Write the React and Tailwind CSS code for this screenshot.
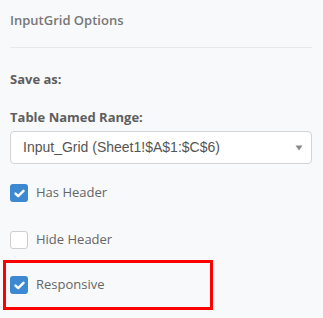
export default function App() {
  const Check = ({ checked }) =>
    checked ? (
      <span className="flex h-[18px] w-[18px] items-center justify-center rounded-[3px] bg-[#3c88d1]">
        <svg width="11" height="9" viewBox="0 0 11 9">
          <path d="M1.5 4.6 L4.2 7.2 L9.5 1.8" fill="none" stroke="#fff" strokeWidth="2.4" strokeLinecap="round" strokeLinejoin="round" />
        </svg>
      </span>
    ) : (
      <span className="h-[18px] w-[18px] rounded-[3px] border border-[#cfcfcf] bg-white" />
    );

  return (
    <div className="h-[318px] w-[323px] overflow-hidden bg-[#f8f9fb] font-['Open_Sans',sans-serif]">
      <div className="px-[10px] pt-[10px]">
        <div className="text-[13px] font-semibold leading-[20px] text-[#777777]">InputGrid Options</div>
        <div className="mt-[17px] h-px w-[302px] bg-[#e8e9ec]" />
        <div className="mt-[22px] text-[13px] font-bold leading-[18px] text-[#5e5e5e]">Save as:</div>
        <div className="mt-[20px] text-[13px] font-bold leading-[18px] text-[#5e5e5e]">Table Named Range:</div>
        <div className="mt-[5px] flex h-[33px] w-[302px] items-center justify-between rounded-[4px] border border-[#d4d4d4] bg-white pl-[12px] pr-[8px]">
          <span className="font-['Liberation_Sans',sans-serif] text-[14px] text-[#555555]">Input_Grid (Sheet1!$A$1:$C$6)</span>
          <svg width="8" height="6" viewBox="0 0 8 6">
            <path d="M0.5 0.5 L7.5 0.5 L4 5.5 Z" fill="#8a8a8a" />
          </svg>
        </div>
        <div className="mt-[20px] flex h-[18px] items-center gap-[8px]">
          <Check checked />
          <span className="text-[13px] text-[#666666]">Has Header</span>
        </div>
        <div className="mt-[29px] flex h-[18px] items-center gap-[8px]">
          <Check />
          <span className="text-[13px] text-[#666666]">Hide Header</span>
        </div>
      </div>
      <div className="ml-[3px] mt-[11px] flex h-[50px] w-[210px] items-center border-[3px] border-[#ff0000] pl-[4px]">
        <div className="flex h-[18px] items-center gap-[8px]">
          <Check checked />
          <span className="text-[13px] text-[#666666]">Responsive</span>
        </div>
      </div>
    </div>
  );
}
